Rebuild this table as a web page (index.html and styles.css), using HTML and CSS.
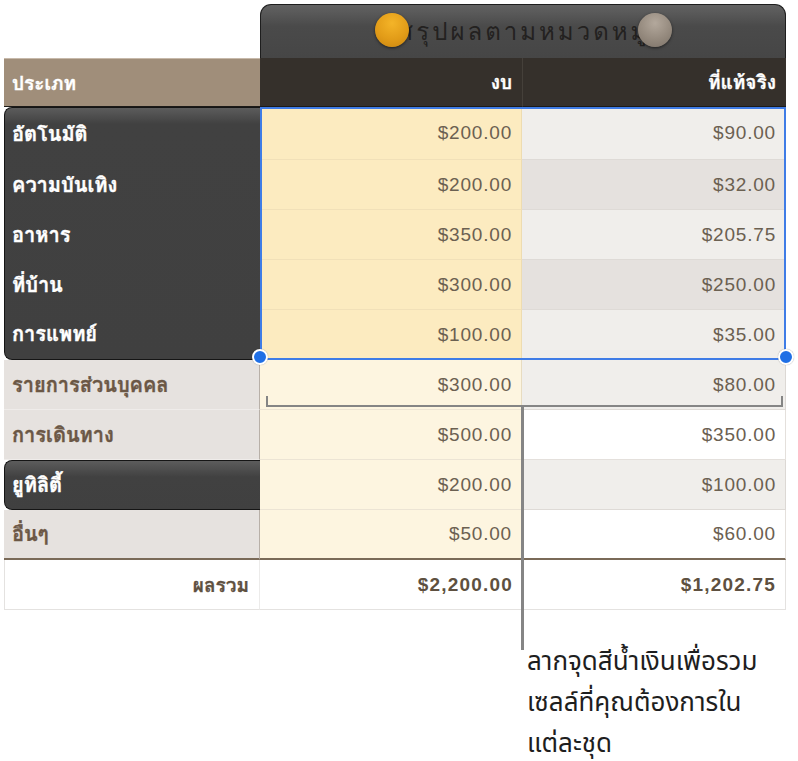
FILE: index.html
```html
<!DOCTYPE html>
<html lang="th">
<head>
<meta charset="utf-8">
<title>สรุปผลตามหมวดหมู่</title>
<link rel="stylesheet" href="styles.css">
</head>
<body>
<div class="page">
  <div class="tabrow">
    <div class="tab">
      <span class="title">สรุปผลตามหมวดหมู่</span>
      <span class="knob gold"></span>
      <span class="knob gray"></span>
    </div>
  </div>
  <div class="grid">
    <div class="col col1">
      <div class="cell head tan">ประเภท</div>
      <div class="group dark g5">
        <div class="cell lab first">อัตโนมัติ</div>
        <div class="cell lab">ความบันเทิง</div>
        <div class="cell lab">อาหาร</div>
        <div class="cell lab">ที่บ้าน</div>
        <div class="cell lab">การแพทย์</div>
      </div>
      <div class="cell lab light">รายการส่วนบุคคล</div>
      <div class="cell lab light">การเดินทาง</div>
      <div class="group dark g1">
        <div class="cell lab">ยูทิลิตี้</div>
      </div>
      <div class="cell lab light last">อื่นๆ</div>
      <div class="cell total lbl">ผลรวม</div>
    </div>
    <div class="col col2">
      <div class="cell head darkhead">งบ</div>
      <div class="cell num sel first">$200.00</div>
      <div class="cell num sel">$200.00</div>
      <div class="cell num sel">$350.00</div>
      <div class="cell num sel">$300.00</div>
      <div class="cell num sel">$100.00</div>
      <div class="cell num cream">$300.00</div>
      <div class="cell num cream">$500.00</div>
      <div class="cell num cream">$200.00</div>
      <div class="cell num cream last">$50.00</div>
      <div class="cell num total">$2,200.00</div>
    </div>
    <div class="col col3">
      <div class="cell head darkhead sep">ที่แท้จริง</div>
      <div class="cell num g1c first">$90.00</div>
      <div class="cell num g2c">$32.00</div>
      <div class="cell num g1c">$205.75</div>
      <div class="cell num g2c">$250.00</div>
      <div class="cell num g1c">$35.00</div>
      <div class="cell num g1c">$80.00</div>
      <div class="cell num wh">$350.00</div>
      <div class="cell num g1c">$100.00</div>
      <div class="cell num wh last">$60.00</div>
      <div class="cell num total">$1,202.75</div>
    </div>
    <div class="selection"></div>
    <span class="handle hl"></span>
    <span class="handle hr"></span>
    <div class="bracket"></div>
    <div class="leader"></div>
  </div>
  <p class="callout">ลากจุดสีน้ำเงินเพื่อรวม<br>เซลล์ที่คุณต้องการใน<br>แต่ละชุด</p>
</div>
</body>
</html>
```

FILE: styles.css
```css
* { box-sizing: border-box; }
html, body { margin: 0; padding: 0; background: #fff; }
body {
  width: 798px;
  height: 761px;
  overflow: hidden;
  font-family: "Noto Sans", "Noto Sans Thai", "DejaVu Sans", "Liberation Sans", sans-serif;
}
.page { padding: 4px 0 0 4px; }

.tabrow { display: flex; padding-left: 256px; height: 54px; }
.tab {
  position: relative;
  width: 526px;
  height: 54px;
  border: 1px solid #1e1e1e;
  border-bottom: none;
  border-radius: 11px 11px 0 0;
  background: linear-gradient(#626262, #4a4a4a 40%, #464646);
  display: flex;
  align-items: center;
  justify-content: center;
}
.title {
  font-family: "Waree", "Loma", "Garuda", "Noto Sans", "Noto Sans Thai", sans-serif;
  font-size: 24px;
  letter-spacing: 3px;
  color: #232120;
  padding-left: 2px;
}
.knob {
  position: absolute;
  top: 8px;
  width: 34px;
  height: 34px;
  border-radius: 50%;
  box-shadow: 0 1px 3px rgba(0,0,0,.55);
}
.gold { left: 114px; background: radial-gradient(circle at 50% 30%, #f4b428, #e29c18 55%, #c98510); }
.gray { left: 377px; background: radial-gradient(circle at 50% 30%, #b3a89c, #958a7e 55%, #7c7268); }

.grid { position: relative; display: flex; width: 782px; }
.col { display: flex; flex-direction: column; }
.col1 { width: 256px; }
.col2 { width: 262px; }
.col3 { width: 264px; }

.cell {
  height: 50px;
  display: flex;
  align-items: center;
  padding: 0 10px;
  border-bottom: 1px solid transparent;
}
.cell.first { height: 53px; }
.head {
  height: 49px;
  font-family: "Waree", "Loma", "Garuda", "Noto Sans", "Noto Sans Thai", sans-serif;
  font-weight: bold;
  font-size: 19px;
  color: #fff;
  -webkit-text-stroke: 0.35px currentColor;
  justify-content: flex-end;
}
.tan {
  justify-content: flex-start;
  background: #a08e7a;
  border-top: 1px solid #c7b9aa;
  padding-left: 8px;
}
.darkhead { background: #35302b; border-bottom: 1px solid #1c1a18; }
.sep { border-left: 1px solid #45403a; }
.head.tan { border-bottom: 1px solid #1c1a18; }

.lab {
  font-family: "Waree", "Loma", "Garuda", "Noto Sans", "Noto Sans Thai", sans-serif;
  font-weight: bold;
  font-size: 20px;
  padding-left: 7px;
  -webkit-text-stroke: 0.4px currentColor;
}
.group {
  background: linear-gradient(#5c5c5c, #414141 16px, #404040);
  border: 1px solid #151515;
  border-right: none;
  border-radius: 8px 0 0 8px;
  color: #fff;
}
.g5 { height: 253px; display: flex; flex-direction: column; }
.g5 .cell { height: 50px; }
.g5 .cell.first { height: 52px; }
.g5 .cell:last-child { height: 49px; }
.g1 { height: 50px; }
.g1 .cell { height: 48px; }
.light {
  background: #e6e2df;
  color: #6b5745;
  border-bottom: 1px solid #efecea;
  border-right: 1px solid #b8b0a8;
}
.light.last { border-bottom: 2px solid #7a6a58; }
.col1 .cell.lab.light { padding-left: 8px; }

.num {
  justify-content: flex-end;
  font-family: "Liberation Sans", Arial, sans-serif;
  font-size: 19px;
  letter-spacing: 0.8px;
  color: #6b6051;
  padding-right: 9px;
}
.sel { background: #fcebc0; border-bottom: 1px solid #f1e0b8; border-right: 1px solid #eedcb0; }
.cream { background: #fdf5e0; border-bottom: 1px solid #ece4d4; border-right: 1px solid #e8dcc0; }
.cream.last, .wh.last { border-bottom: 2px solid #7a6a58; }
.g1c { background: #f0eeeb; border-bottom: 1px solid #dedad6; border-right: 1px solid #dcd8d4; }
.g2c { background: #e5e1de; border-bottom: 1px solid #dedad6; border-right: 1px solid #dcd8d4; }
.wh { background: #fff; border-bottom: 1px solid #e4e0dc; border-right: 1px solid #e4e0dc; }

.total {
  background: #fff;
  font-weight: bold;
  color: #5e5040;
  border-bottom: 1px solid #e4e2e0;
  justify-content: flex-end;
}
.num.total { letter-spacing: 1.2px; }
.total.lbl {
  font-family: "Waree", "Loma", "Garuda", "Noto Sans", "Noto Sans Thai", sans-serif;
  font-size: 19px;
  -webkit-text-stroke: 0.35px currentColor;
  border-left: 1px solid #e4e2e0;
  border-right: 1px solid #ecebea;
}
.col3 .total { border-right: 1px solid #e4e2e0; }

.selection {
  position: absolute;
  left: 256px;
  top: 49px;
  width: 526px;
  height: 253px;
  border: 2px solid #3f7ce6;
  pointer-events: none;
}
.handle {
  position: absolute;
  width: 16px;
  height: 16px;
  border-radius: 50%;
  background: #1f6fe5;
  border: 2px solid #fff;
  box-shadow: 0 0 1px rgba(0,0,0,.4);
  top: 291px;
}
.hl { left: 248px; }
.hr { left: 774px; }
.bracket {
  position: absolute;
  left: 262px;
  top: 338px;
  width: 517px;
  height: 11px;
  border: 2.5px solid #858585;
  border-top: none;
}
.leader {
  position: absolute;
  left: 517px;
  top: 348px;
  width: 2.5px;
  height: 244px;
  background: #858585;
}

.callout {
  margin: 30px 0 0 523px;
  font-size: 26px;
  line-height: 41px;
  color: #1e1e1e;
  font-weight: normal;
}
```
